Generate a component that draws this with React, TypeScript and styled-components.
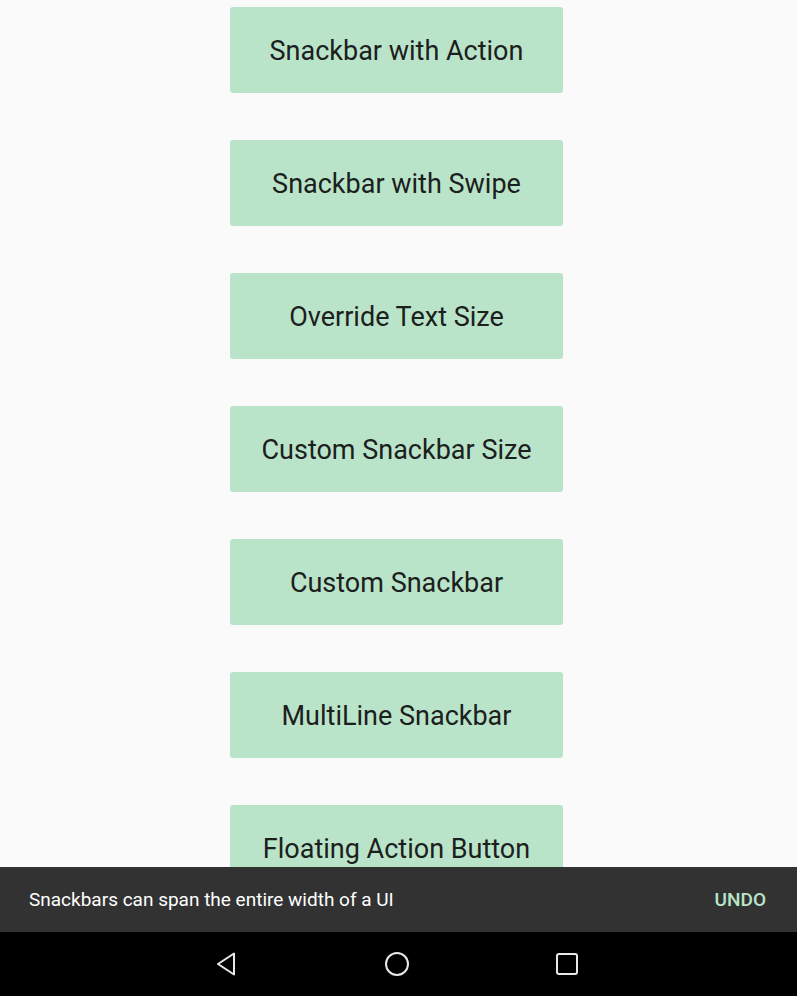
import styled, { createGlobalStyle } from "styled-components";

const GlobalStyle = createGlobalStyle`
  html, body {
    margin: 0;
    padding: 0;
    height: 100%;
    background: #fafafa;
  }
  #root {
    height: 100%;
  }
`;

const Screen = styled.div`
  display: flex;
  flex-direction: column;
  width: 797px;
  height: 996px;
  background: #fafafa;
  font-family: Roboto, "Liberation Sans", sans-serif;
`;

const Content = styled.div`
  flex: 1;
  overflow: hidden;
  display: flex;
  flex-direction: column;
  align-items: center;
  gap: 47px;
  padding: 7px 4px 0 0;
`;

const DemoButton = styled.button`
  flex-shrink: 0;
  width: 333px;
  height: 86px;
  padding: 2px 0 0;
  border: none;
  border-radius: 3px;
  background: #b9e4c9;
  color: #1c201d;
  font-family: Roboto, "Liberation Sans", sans-serif;
  font-size: 27px;
  cursor: pointer;
`;

const Snackbar = styled.div`
  flex-shrink: 0;
  height: 65px;
  background: #323232;
  display: flex;
  align-items: center;
  justify-content: space-between;
  padding: 0 31px 0 29px;
`;

const SnackText = styled.span`
  color: #ffffff;
  font-size: 19px;
`;

const SnackAction = styled.span`
  color: #b9e4c9;
  font-size: 19px;
  font-weight: 500;
`;

const NavBar = styled.div`
  flex-shrink: 0;
  height: 64px;
  background: #000;
  display: grid;
  grid-template-columns: repeat(3, 24px);
  justify-content: center;
  column-gap: 146px;
  align-items: center;
  padding-right: 4px;
`;

const NavIcon = styled.svg`
  width: 24px;
  height: 24px;
  display: block;
`;

const labels = [
  "Snackbar with Action",
  "Snackbar with Swipe",
  "Override Text Size",
  "Custom Snackbar Size",
  "Custom Snackbar",
  "MultiLine Snackbar",
  "Floating Action Button",
];

export default function App() {
  return (
    <>
      <GlobalStyle />
      <Screen>
        <Content>
          {labels.map((l) => (
            <DemoButton key={l}>{l}</DemoButton>
          ))}
        </Content>
        <Snackbar>
          <SnackText>Snackbars can span the entire width of a UI</SnackText>
          <SnackAction>UNDO</SnackAction>
        </Snackbar>
        <NavBar>
          <NavIcon viewBox="0 0 24 24" fill="none" stroke="#e8e8e8" strokeWidth="2" strokeLinejoin="round">
            <path d="M19 1.5 L19 22.5 L3 12 Z" />
          </NavIcon>
          <NavIcon viewBox="0 0 24 24" fill="none" stroke="#e8e8e8" strokeWidth="2">
            <circle cx="12" cy="12" r="11" />
          </NavIcon>
          <NavIcon viewBox="0 0 24 24" fill="none" stroke="#e8e8e8" strokeWidth="2">
            <rect x="2" y="2" width="20" height="20" rx="2" />
          </NavIcon>
        </NavBar>
      </Screen>
    </>
  );
}
